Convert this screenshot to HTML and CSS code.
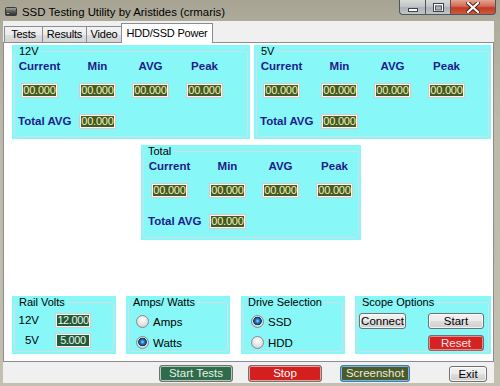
FILE: index.html
```html
<!DOCTYPE html>
<html>
<head>
<meta charset="utf-8">
<link rel="stylesheet" href="styles.css">
</head>
<body>
<div class="window">
  <div class="titlebar">
    <svg class="app-icon" width="12" height="9" viewBox="0 0 12 9">
      <defs><linearGradient id="ig" x1="0" y1="0" x2="0" y2="1"><stop offset="0" stop-color="#a8a8a8"/><stop offset="0.5" stop-color="#5a5a5a"/><stop offset="1" stop-color="#2c2c2c"/></linearGradient></defs>
      <rect x="0.5" y="0.5" width="11" height="8" rx="1" fill="url(#ig)" stroke="#3a3a3a"/>
      <rect x="2" y="6" width="2" height="1" fill="#9fd27a"/>
    </svg>
    <span class="title">SSD Testing Utility by Aristides (crmaris)</span>
    <div class="caption">
      <div class="cbtn cmin"><svg width="10" height="4" viewBox="0 0 10 4"><rect x="0.5" y="0.5" width="9" height="3" fill="#fff" stroke="#3b4450"/></svg></div>
      <div class="cbtn cmax"><svg width="11" height="9" viewBox="0 0 11 9"><rect x="0.5" y="0.5" width="10" height="8" fill="none" stroke="#3b4450"/><rect x="1.5" y="1.5" width="8" height="6" fill="none" stroke="#fff"/><rect x="2.5" y="3" width="6" height="4" fill="none" stroke="#3b4450" stroke-width="0.8"/></svg></div>
      <div class="cbtn cclose"><svg width="14" height="11" viewBox="0 0 14 11"><path d="M2 1 L12 10 M12 1 L2 10" stroke="#4a2018" stroke-width="4" stroke-linecap="square"/><path d="M2 1 L12 10 M12 1 L2 10" stroke="#fff" stroke-width="2.2" stroke-linecap="square"/></svg></div>
    </div>
  </div>
  <div class="client">
    <div class="tabstrip">
      <div class="tab tab-tests">Tests</div>
      <div class="tab tab-results">Results</div>
      <div class="tab tab-video">Video</div>
      <div class="tab tab-power active">HDD/SSD Power</div>
    </div>
    <div class="page">
      <div class="row-top">
        <div class="panel panel-12v">
          <fieldset class="group">
            <legend>12V</legend>
            <div class="readings">
              <div class="hd">Current</div><div class="hd">Min</div><div class="hd">AVG</div><div class="hd">Peak</div>
              <div class="val">00.000</div><div class="val">00.000</div><div class="val">00.000</div><div class="val">00.000</div>
              <div class="hd total-lbl">Total AVG</div><div class="val">00.000</div>
            </div>
          </fieldset>
        </div>
        <div class="panel panel-5v">
          <fieldset class="group">
            <legend>5V</legend>
            <div class="readings">
              <div class="hd">Current</div><div class="hd">Min</div><div class="hd">AVG</div><div class="hd">Peak</div>
              <div class="val">00.000</div><div class="val">00.000</div><div class="val">00.000</div><div class="val">00.000</div>
              <div class="hd total-lbl">Total AVG</div><div class="val">00.000</div>
            </div>
          </fieldset>
        </div>
      </div>
      <div class="panel panel-total">
        <fieldset class="group">
          <legend>Total</legend>
          <div class="readings">
            <div class="hd">Current</div><div class="hd">Min</div><div class="hd">AVG</div><div class="hd">Peak</div>
            <div class="val">00.000</div><div class="val">00.000</div><div class="val">00.000</div><div class="val">00.000</div>
            <div class="hd total-lbl">Total AVG</div><div class="val">00.000</div>
          </div>
        </fieldset>
      </div>
      <div class="row-bottom">
        <div class="panel panel-small">
          <fieldset class="group">
            <legend>Rail Volts</legend>
            <div class="rails">
              <div class="rail-lbl">12V</div><div class="rail-val">12.000</div>
              <div class="rail-lbl">5V</div><div class="rail-val">5.000</div>
            </div>
          </fieldset>
        </div>
        <div class="panel panel-small">
          <fieldset class="group">
            <legend>Amps/ Watts</legend>
            <div class="radios">
              <div class="radio-row"><span class="radio"></span><span>Amps</span></div>
              <div class="radio-row"><span class="radio on"></span><span>Watts</span></div>
            </div>
          </fieldset>
        </div>
        <div class="panel panel-small">
          <fieldset class="group">
            <legend>Drive Selection</legend>
            <div class="radios">
              <div class="radio-row"><span class="radio on"></span><span>SSD</span></div>
              <div class="radio-row"><span class="radio"></span><span>HDD</span></div>
            </div>
          </fieldset>
        </div>
        <div class="panel panel-scope">
          <fieldset class="group">
            <legend>Scope Options</legend>
            <div class="scope">
              <div class="btn btn-connect">Connect</div>
              <div class="btn btn-start">Start</div>
              <div class="btn btn-reset">Reset</div>
            </div>
          </fieldset>
        </div>
      </div>
    </div>
    <div class="bottombar">
      <div class="btn btn-tests">Start Tests</div>
      <div class="btn btn-stop">Stop</div>
      <div class="btn btn-shot">Screenshot</div>
      <div class="btn btn-exit">Exit</div>
    </div>
  </div>
</div>
</body>
</html>
```
FILE: styles.css
```css
* { box-sizing: border-box; }
html, body { margin: 0; padding: 0; }
body {
  width: 500px;
  height: 386px;
  overflow: hidden;
  font-family: "Liberation Sans", Arial, sans-serif;
  font-size: 11px;
  color: #000;
  background: #bdb8a8;
}
.window {
  width: 500px;
  height: 386px;
  display: flex;
  flex-direction: column;
  background: linear-gradient(180deg, #a7a392 0px, #afab9b 21px, #bdb9a9 120px, #c4c0b1 386px);
}
.titlebar {
  height: 21px;
  flex-shrink: 0;
  display: flex;
  align-items: center;
}
.app-icon { margin: 1px 5px 0 5px; flex-shrink: 0; }
.title {
  font-size: 11.4px;
  color: #000;
  padding-top: 2px;
}
.caption {
  margin-left: auto;
  margin-right: 4px;
  align-self: flex-start;
  display: flex;
}
.cbtn {
  height: 15px;
  display: flex;
  align-items: center;
  justify-content: center;
  border: 1px solid #4d5660;
  border-top: none;
}
.cmin {
  width: 26px;
  border-bottom-left-radius: 4px;
  border-right: none;
  background: linear-gradient(180deg, #d8dadb 0%, #c4c6c6 45%, #aeb1b3 55%, #c2c6c8 100%);
  padding-top: 5px;
}
.cmax {
  width: 25px;
  border-right: none;
  background: linear-gradient(180deg, #d8dadb 0%, #c4c6c6 45%, #aeb1b3 55%, #c2c6c8 100%);
}
.cclose {
  width: 46px;
  border-bottom-right-radius: 4px;
  background: linear-gradient(180deg, #e3a593 0%, #d36a55 45%, #c23a22 55%, #cf5a3c 100%);
}
.client {
  margin-left: 3px;
  width: 491px;
  height: 362px;
  flex-shrink: 0;
  background: #f0f0f0;
  display: flex;
  flex-direction: column;
}
.tabstrip {
  height: 21px;
  flex-shrink: 0;
  display: flex;
  align-items: flex-end;
  padding-left: 1px;
}
.tab {
  height: 16px;
  border: 1px solid #898c95;
  border-bottom: none;
  background: linear-gradient(180deg, #f3f3f3 0%, #ebebeb 50%, #dddddd 51%, #d6d6d6 100%);
  font-size: 11px;
  letter-spacing: -0.2px;
  line-height: 15px;
  text-align: center;
  white-space: nowrap;
}
.tab-tests { width: 39px; }
.tab-results { width: 45px; margin-left: -1px; }
.tab-video { width: 36px; margin-left: -1px; }
.tab.active {
  width: 92px;
  height: 20px;
  margin-left: -1px;
  margin-bottom: -1px;
  background: #ffffff;
  line-height: 18px;
  position: relative;
  z-index: 1;
}
.page {
  height: 320px;
  flex-shrink: 0;
  border: 1px solid #898c95;
  background: #ffffff;
  padding: 2px 0 7px 8px;
  display: flex;
  flex-direction: column;
}
.row-top { display: flex; gap: 4px; }
.panel { background: #88f7f7; flex-shrink: 0; }
.panel-12v { width: 238px; height: 94px; }
.panel-5v { width: 237px; height: 94px; }
.panel-total { width: 220px; height: 95px; margin: 6px 0 0 129px; }
.group {
  margin: 0 2px;
  padding: 0;
  border: 1px solid #d3dfe3;
  border-radius: 3px;
  height: calc(100% - 2px);
  min-width: 0;
}
.group legend {
  margin-left: 2px;
  padding: 0 2px;
  font-size: 11px;
  line-height: 12px;
  color: #000;
  white-space: nowrap;
}
.readings {
  display: grid;
  grid-template-columns: 49px 67px 39px 69px;
  grid-template-rows: 18px 23px 31px;
  align-items: end;
  justify-items: center;
}
.panel-total .readings { margin-left: 1px; }
.hd {
  font-weight: bold;
  font-size: 11.5px;
  line-height: 18px;
  color: #1c1c8c;
  white-space: nowrap;
}
.hd.total-lbl {
  justify-self: start;
  margin-left: 3px;
  line-height: 15px;
}
.val {
  width: 37px;
  height: 15px;
  border: 1px solid #d6c9c9;
  box-shadow: inset 0 0 0 1px #f6f6f0;
  background: #425a25;
  color: #f2f2b4;
  font-size: 11px;
  line-height: 13px;
  text-align: center;
  letter-spacing: -0.2px;
}
.row-bottom {
  margin-top: auto;
  display: flex;
  height: 58px;
}
.panel-small { width: 104px; height: 58px; margin-right: 10px; }
.panel-small:nth-child(2) { margin-right: 11px; }
.panel-scope { width: 136px; height: 58px; }
.rails {
  display: grid;
  grid-template-columns: 24px 36px;
  grid-template-rows: 15px 15px;
  column-gap: 16px;
  row-gap: 5px;
  margin-top: 5px;
  align-items: center;
}
.rail-lbl { text-align: right; font-size: 11.5px; line-height: 15px; }
.rail-val {
  height: 15px;
  border: 1px solid #d6cece;
  box-shadow: inset 0 0 0 1px #f0f4f0;
  background: #1f5a3a;
  color: #eef4e6;
  font-size: 11px;
  line-height: 13px;
  letter-spacing: -0.4px;
  text-align: center;
}
.radios {
  display: flex;
  flex-direction: column;
  margin-top: 3px;
  padding-left: 7px;
}
.radio-row {
  height: 21px;
  display: flex;
  align-items: center;
  gap: 4px;
  font-size: 11.5px;
}
.radio {
  width: 13px;
  height: 13px;
  border-radius: 50%;
  border: 1px solid #8a8a8a;
  background: radial-gradient(circle at 50% 35%, #fdfdfd 0%, #e8e8e8 45%, #c6c6c6 100%);
  flex-shrink: 0;
}
.radio.on {
  background:
    radial-gradient(circle at 50% 45%, #9bdcff 0px, #2f8ed8 1.6px, #0f4f93 3.2px, #14325c 4px, rgba(0,0,0,0) 4.6px),
    radial-gradient(circle at 50% 35%, #fdfdfd 0%, #e8e8e8 45%, #c6c6c6 100%);
}
.scope {
  display: grid;
  grid-template-columns: 47px 56px;
  grid-template-rows: 16px 16px;
  column-gap: 22px;
  row-gap: 6px;
  margin: 5px 0 0 1px;
}
.btn {
  height: 16px;
  border: 1px solid #707070;
  border-radius: 3px;
  background: linear-gradient(180deg, #f2f2f2 0%, #ebebeb 50%, #dddddd 51%, #cfcfcf 100%);
  box-shadow: inset 0 0 0 1px rgba(255,255,255,0.7);
  font-size: 11.5px;
  line-height: 14px;
  text-align: center;
  white-space: nowrap;
}
.btn-reset {
  grid-column: 2;
  background: #d42323;
  box-shadow: inset 0 0 0 1px #e88a8a;
  color: #fbe4e4;
}
.bottombar {
  flex: 1;
  display: flex;
  align-items: flex-start;
  padding-top: 3px;
}
.btn-tests {
  width: 74px;
  height: 17px;
  margin-left: 156px;
  background: #2f6c4c;
  box-shadow: inset 0 0 0 1px #b8c8bc;
  color: #e4efe4;
}
.btn-stop {
  width: 74px;
  height: 17px;
  margin-left: 15px;
  background: #d41f1f;
  box-shadow: inset 0 0 0 1px #eaa0a0;
  color: #ffffff;
}
.btn-shot {
  width: 70px;
  height: 17px;
  margin-left: 18px;
  border-color: #3d7cb0;
  background: #4a5a2a;
  box-shadow: inset 0 0 0 1px #7fb5dc;
  color: #e8ecdc;
}
.btn-exit {
  width: 38px;
  height: 16px;
  margin-left: 39px;
  margin-top: 1px;
}
```
